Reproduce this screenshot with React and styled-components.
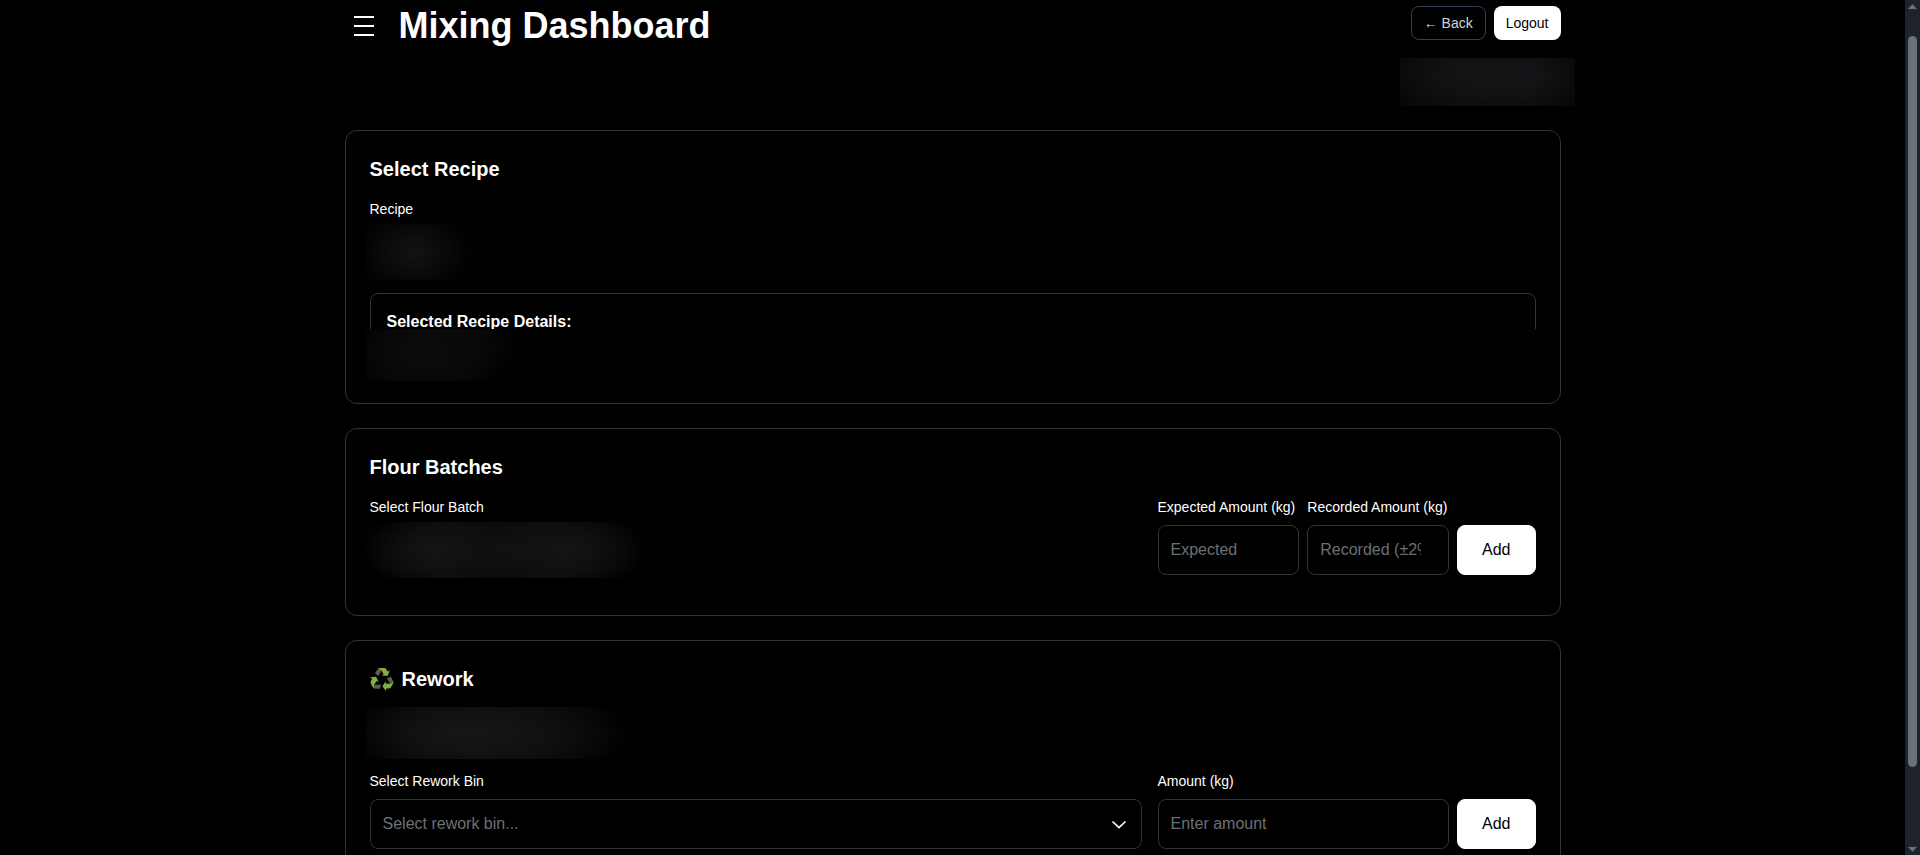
import React from 'react';
import styled, { createGlobalStyle } from 'styled-components';

const GlobalStyle = createGlobalStyle`
  *, *::before, *::after {
    box-sizing: border-box;
  }

  body {
    margin: 0;
    color: #fff;
    background-color: #000;
    font-family: 'Liberation Sans', Arial, sans-serif;
    font-size: 16px;
    line-height: 24px;
  }

  button, input, select {
    font: inherit;
  }
`;

const Shell = styled.div`
  display: flex;
  height: 100vh;
`;

const Viewport = styled.div`
  flex: 1;
  min-width: 0;
  overflow-y: auto;
  scrollbar-width: none;
`;

const Page = styled.main`
  display: flex;
  flex-direction: column;
  gap: 24px;
  max-width: 1280px;
  margin: 0 auto;
  padding: 6px 32px 24px;
`;

const Header = styled.header`
  display: flex;
  justify-content: space-between;
  align-items: flex-start;
`;

const Brand = styled.div`
  display: flex;
  align-items: center;
  gap: 16px;
`;

const MenuButton = styled.button`
  display: flex;
  flex-direction: column;
  gap: 7px;
  width: 38px;
  padding: 9px;
  border: 0;
  background: none;
  cursor: pointer;
`;

const MenuBar = styled.span`
  height: 2px;
  background-color: #fff;
`;

const Title = styled.h1`
  margin: 0;
  font-size: 36px;
  line-height: 40px;
`;

const HeaderSide = styled.div`
  display: flex;
  flex-direction: column;
  align-items: flex-end;
`;

const HeaderActions = styled.div`
  display: flex;
  gap: 8px;
`;

const SmallButton = styled.button`
  height: 34px;
  padding: 0 12px;
  border: ${({ $outlined }) => ($outlined ? '1px solid #334155' : '0')};
  border-radius: 8px;
  color: ${({ $outlined }) => ($outlined ? '#d1d5db' : '#000')};
  background-color: ${({ $outlined }) => ($outlined ? '#000' : '#fff')};
  font-size: 14px;
  line-height: 20px;
  cursor: pointer;
`;

const UserBadge = styled.div`
  width: 175px;
  height: 48px;
  margin: 18px -14px 0;
  background:
    radial-gradient(ellipse 56px 40px at 72% 38%, #141518, transparent),
    radial-gradient(ellipse 80px 44px at 38% 30%, #141414, transparent),
    radial-gradient(ellipse 100px 60px at 50% 40%, #101010, transparent),
    #070707;
`;

const Card = styled.section`
  padding: 24px;
  border: 1px solid #333;
  border-radius: 12px;
`;

const CardTitle = styled.h2`
  display: flex;
  align-items: center;
  gap: 8px;
  margin: 0 0 16px;
  font-size: 20px;
  line-height: 28px;
`;

const Row = styled.div`
  display: grid;
  grid-template-columns: repeat(3, minmax(0, 1fr));
  gap: 16px;
  margin-bottom: 16px;
`;

const RowGroup = styled.div`
  display: flex;
  align-items: flex-end;
  gap: 8px;
`;

const Field = styled.div`
  flex: 1;
  min-width: 0;
  grid-column: span ${({ $span }) => $span || 1};
`;

const Label = styled.label`
  display: block;
  margin-bottom: 8px;
  font-size: 14px;
  line-height: 20px;
  white-space: nowrap;
`;

const Input = styled.input`
  display: block;
  width: 100%;
  height: 50px;
  padding: 12px;
  border: 1px solid #333;
  border-radius: 8px;
  color: #fff;
  background-color: #000;

  &::placeholder {
    color: #6b7075;
  }
`;

const SelectWrapper = styled.div`
  position: relative;
`;

const Select = styled.select`
  display: block;
  width: 100%;
  height: 50px;
  padding: 12px;
  border: 1px solid #333;
  border-radius: 8px;
  color: #6b7075;
  background-color: #000;
  appearance: none;
`;

const Chevron = styled.svg`
  position: absolute;
  top: 13px;
  right: 11px;
  pointer-events: none;
`;

const AddButton = styled.button`
  height: 50px;
  padding: 12px 24px;
  border: 1px solid #fff;
  border-radius: 8px;
  color: #000;
  background-color: #fff;
  cursor: pointer;
`;

// Controls whose value is masked spill slightly over their own box.
const MaskedSelect = styled.select`
  display: block;
  width: calc(100% + 8px);
  height: 56px;
  margin: -3px -4px;
  border: 0;
  background: ${({ $glow }) => $glow}, #010101;
  appearance: none;
`;

const MaskedNote = styled.div`
  height: 52px;
  margin: -2px -4px 12px;
  background:
    radial-gradient(ellipse 110px 40px at 100px 50%, #151617, transparent),
    radial-gradient(ellipse 90px 40px at 165px 50%, #0f0f0f, transparent),
    radial-gradient(ellipse 140px 60px at 118px 50%, #101010, #0a0a0a 60%, transparent),
    #010101;
`;

const Details = styled.div`
  height: 86px;
  margin-top: 16px;
  padding: 16px;
  border: 1px solid #333;
  border-radius: 8px;
`;

const DetailsTitle = styled.h3`
  margin: 0;
  font-size: 16px;
  line-height: 24px;
`;

const MaskedDetails = styled.div`
  position: relative;
  height: 52px;
  margin: -5px -21px 0;
  background:
    radial-gradient(ellipse 60px 44px at 92px 25%, #0a0a0a, transparent),
    radial-gradient(ellipse 76px 50px at 60px 48%, #0d0d0d, #080808 60%, transparent),
    #010101;
`;

const ScrollTrack = styled.div`
  display: flex;
  flex-direction: column;
  align-items: center;
  width: 15px;
  padding: 4px 0 3px;
  background-color: #1d222b;
`;

const ScrollArrow = styled.svg`
  display: block;
  flex: none;
`;

const ScrollThumb = styled.div`
  width: 9px;
  flex: 730;
  margin-top: 27px;
  border-radius: 5px;
  background-color: #69727a;
`;

const ScrollRest = styled.div`
  flex: 80;
`;

const recipeGlow = 'radial-gradient(ellipse 56px 42px at 48px 50%, #131313, #090909 60%, transparent)';
const batchGlow = `
  radial-gradient(ellipse 70px 40px at 68px 50%, #141414, transparent),
  radial-gradient(ellipse 80px 40px at 200px 50%, #141414, transparent),
  radial-gradient(ellipse 140px 56px at 136px 50%, #101010, #0a0a0a 65%, transparent)`;

const RecycleArrow = ({ angle }) => (
  <g transform={`rotate(${angle} 12 12.6)`}>
    <path d="M5 6.3L7.9 1.9L11.4 3.4L8.4 9.2Z" fill="#5f5f45" />
    <path d="M7.9 1.9Q8.7 1 10 1H14.2Q15.6 1 16.3 2.2L17.7 4.5L19.9 3.4L17.5 9L11.6 8.6L13.6 7.2L11 2.9Z" fill="#7cb044" />
  </g>
);

const RecycleIcon = () => (
  <svg width="24" height="24" viewBox="0 0 24 24" aria-hidden="true">
    <RecycleArrow angle={0} />
    <RecycleArrow angle={120} />
    <RecycleArrow angle={240} />
  </svg>
);

const App = () => (
  <>
    <GlobalStyle />
    <Shell>
      <Viewport>
        <Page>
          <Header>
            <Brand>
              <MenuButton type="button" aria-label="Menu">
                <MenuBar />
                <MenuBar />
                <MenuBar />
              </MenuButton>
              <Title>Mixing Dashboard</Title>
            </Brand>
            <HeaderSide>
              <HeaderActions>
                <SmallButton type="button" $outlined>
                  ← Back
                </SmallButton>
                <SmallButton type="button">Logout</SmallButton>
              </HeaderActions>
              <UserBadge />
            </HeaderSide>
          </Header>

          <Card>
            <CardTitle>Select Recipe</CardTitle>
            <Label htmlFor="recipe">Recipe</Label>
            <MaskedSelect id="recipe" $glow={recipeGlow} />
            <Details>
              <DetailsTitle>Selected Recipe Details:</DetailsTitle>
              <MaskedDetails />
            </Details>
          </Card>

          <Card>
            <CardTitle>Flour Batches</CardTitle>
            <Row>
              <Field $span={2}>
                <Label htmlFor="batch">Select Flour Batch</Label>
                <MaskedSelect id="batch" $glow={batchGlow} />
              </Field>
              <RowGroup>
                <Field>
                  <Label htmlFor="expected">Expected Amount (kg)</Label>
                  <Input id="expected" type="number" placeholder="Expected" />
                </Field>
                <Field>
                  <Label htmlFor="recorded">Recorded Amount (kg)</Label>
                  <Input id="recorded" type="number" placeholder="Recorded (±2%)" />
                </Field>
                <AddButton type="button">Add</AddButton>
              </RowGroup>
            </Row>
          </Card>

          <Card>
            <CardTitle>
              <RecycleIcon />
              Rework
            </CardTitle>
            <MaskedNote />
            <Row>
              <Field $span={2}>
                <Label htmlFor="bin">Select Rework Bin</Label>
                <SelectWrapper>
                  <Select id="bin" defaultValue="">
                    <option value="">Select rework bin...</option>
                  </Select>
                  <Chevron width="24" height="24" viewBox="0 0 24 24" fill="none" stroke="#fff" strokeWidth="1.7" aria-hidden="true">
                    <path d="M5.5 9.5l6.5 6 6.5-6" />
                  </Chevron>
                </SelectWrapper>
              </Field>
              <RowGroup>
                <Field>
                  <Label htmlFor="amount">Amount (kg)</Label>
                  <Input id="amount" type="number" placeholder="Enter amount" />
                </Field>
                <AddButton type="button">Add</AddButton>
              </RowGroup>
            </Row>
          </Card>
        </Page>
      </Viewport>
      <ScrollTrack aria-hidden="true">
        <ScrollArrow width="9" height="5" viewBox="0 0 9 5">
          <path d="M0 5L4.5 0L9 5z" fill="#69727a" />
        </ScrollArrow>
        <ScrollThumb />
        <ScrollRest />
        <ScrollArrow width="9" height="5" viewBox="0 0 9 5">
          <path d="M0 0L4.5 5L9 0z" fill="#69727a" />
        </ScrollArrow>
      </ScrollTrack>
    </Shell>
  </>
);

export default App;
